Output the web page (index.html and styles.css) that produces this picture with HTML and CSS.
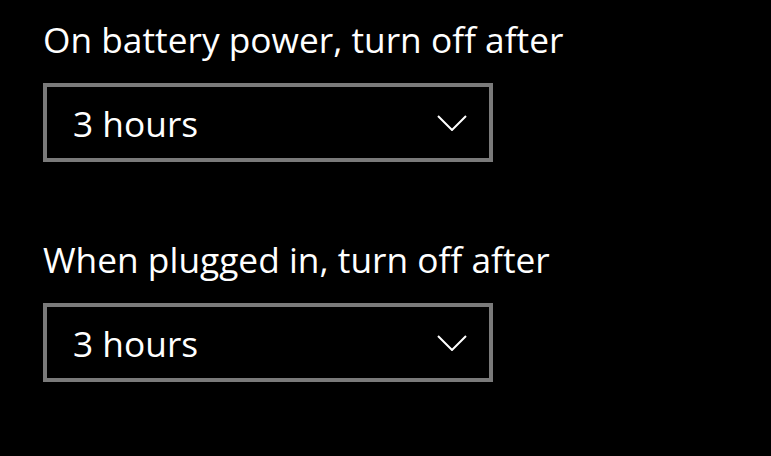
FILE: index.html
```
<!DOCTYPE html>
<html lang="en">
<head>
<meta charset="utf-8">
<title>Screen off settings</title>
<link rel="stylesheet" href="styles.css">
</head>
<body>
<main class="page">
  <section class="setting">
    <div class="label">On battery power, turn off after</div>
    <div class="select">
      <span class="value">3 hours</span>
      <svg class="chevron" viewBox="0 0 30 16" width="30" height="16" aria-hidden="true"><polyline points="1,1 15,15 29,1" fill="none" stroke="#ffffff" stroke-width="2"/></svg>
    </div>
  </section>
  <section class="setting">
    <div class="label">When plugged in, turn off after</div>
    <div class="select">
      <span class="value">3 hours</span>
      <svg class="chevron" viewBox="0 0 30 16" width="30" height="16" aria-hidden="true"><polyline points="1,1 15,15 29,1" fill="none" stroke="#ffffff" stroke-width="2"/></svg>
    </div>
  </section>
</main>
</body>
</html>
```
FILE: styles.css
```
html, body {
  margin: 0;
  padding: 0;
  background: #000000;
}
body {
  width: 771px;
  height: 456px;
  overflow: hidden;
  color: #ffffff;
  font-family: "Open Sans", "Noto Sans", sans-serif;
}
.page {
  display: flex;
  flex-direction: column;
  gap: 73px;
  padding: 15px 0 0 43px;
}
.setting {
  display: flex;
  flex-direction: column;
  gap: 20px;
}
.label {
  font-size: 35.3px;
  line-height: 48px;
  white-space: nowrap;
}
.select {
  box-sizing: border-box;
  width: 450px;
  height: 79px;
  border: 4px solid #7a7a7a;
  display: flex;
  align-items: center;
  justify-content: space-between;
  padding: 0 22px 0 26px;
}
.value {
  font-size: 35.3px;
  line-height: 48px;
}
.chevron {
  display: block;
}
```
